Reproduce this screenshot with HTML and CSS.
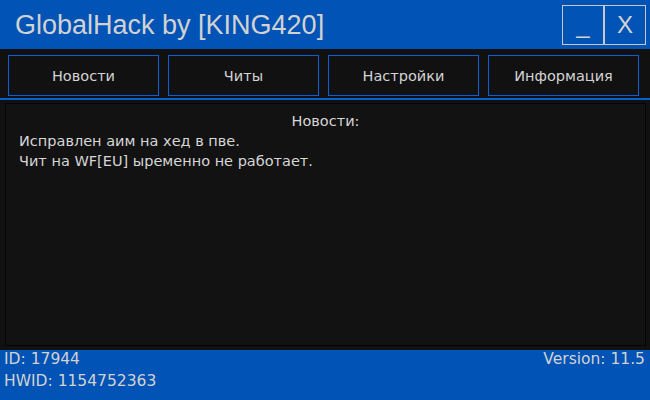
FILE: index.html
```html
<!DOCTYPE html>
<html>
<head>
<meta charset="utf-8">
<link rel="stylesheet" href="styles.css">
</head>
<body>
<div class="window">
  <div class="titlebar">
    <div class="title">GlobalHack by [KING420]</div>
    <div class="winbtns">
      <div class="winbtn">_</div>
      <div class="winbtn">X</div>
    </div>
  </div>
  <div class="nav">
    <div class="navbtn">Новости</div>
    <div class="navbtn">Читы</div>
    <div class="navbtn">Настройки</div>
    <div class="navbtn">Информация</div>
  </div>
  <div class="body">
    <div class="panel">
      <div class="panel-title">Новости:</div>
      <div class="line">Исправлен аим на хед в пве.</div>
      <div class="line">Чит на WF[EU] ыременно не работает.</div>
    </div>
  </div>
  <div class="footer">
    <div class="footer-left">
      <div>ID: 17944</div>
      <div>HWID: 1154752363</div>
    </div>
    <div class="footer-right">Version: 11.5</div>
  </div>
</div>
</body>
</html>
```
FILE: styles.css
```css
html, body {
  margin: 0;
  padding: 0;
  background: #111111;
}
.window {
  width: 650px;
  height: 400px;
  display: flex;
  flex-direction: column;
  font-family: "DejaVu Sans", "Liberation Sans", sans-serif;
  color: #d6d6d6;
  overflow: hidden;
}
.titlebar {
  height: 49px;
  background: #0153b6;
  display: flex;
  justify-content: space-between;
  align-items: flex-start;
  box-sizing: border-box;
}
.title {
  font-family: "Liberation Sans", sans-serif;
  font-size: 27px;
  line-height: 50px;
  padding-left: 15px;
  color: #d2d2d2;
}
.winbtns {
  display: flex;
  margin-top: 5px;
  margin-right: 4px;
  border: 1px solid #c8c8c8;
  height: 38px;
}
.winbtn {
  width: 40px;
  height: 38px;
  display: flex;
  align-items: center;
  justify-content: center;
  font-family: "Liberation Sans", sans-serif;
  font-size: 24px;
  color: #d2d2d2;
}
.winbtn + .winbtn {
  border-left: 2px solid #c8c8c8;
}
.nav {
  height: 51px;
  box-sizing: border-box;
  padding: 6px 11px 0 8px;
  display: grid;
  grid-template-columns: repeat(4, 1fr);
  column-gap: 9px;
  align-items: start;
  border-bottom: 2px solid #0a5fd6;
}
.navbtn {
  height: 41px;
  box-sizing: border-box;
  border: 1px solid #0a5fd6;
  display: flex;
  align-items: center;
  justify-content: center;
  font-size: 14.5px;
  color: #d4d4d4;
}
.body {
  flex: 1;
  padding: 3px 4px 4px 5px;
  display: flex;
}
.panel {
  flex: 1;
  border: 1px solid #050505;
  background: #121212;
  padding: 8px 13px;
  font-size: 14.5px;
}
.panel-title {
  text-align: center;
  line-height: 18px;
  margin-bottom: 1px;
}
.line {
  line-height: 20px;
}
.footer {
  height: 50px;
  background: #0153b6;
  display: flex;
  justify-content: space-between;
  align-items: flex-start;
  padding: 0 5px 0 4px;
  font-size: 15.5px;
  color: #d2d2d2;
}
.footer-left {
  margin-top: -2px;
}
.footer-left div {
  line-height: 22px;
}
.footer-right {
  line-height: 22px;
  margin-top: -2px;
}
```
